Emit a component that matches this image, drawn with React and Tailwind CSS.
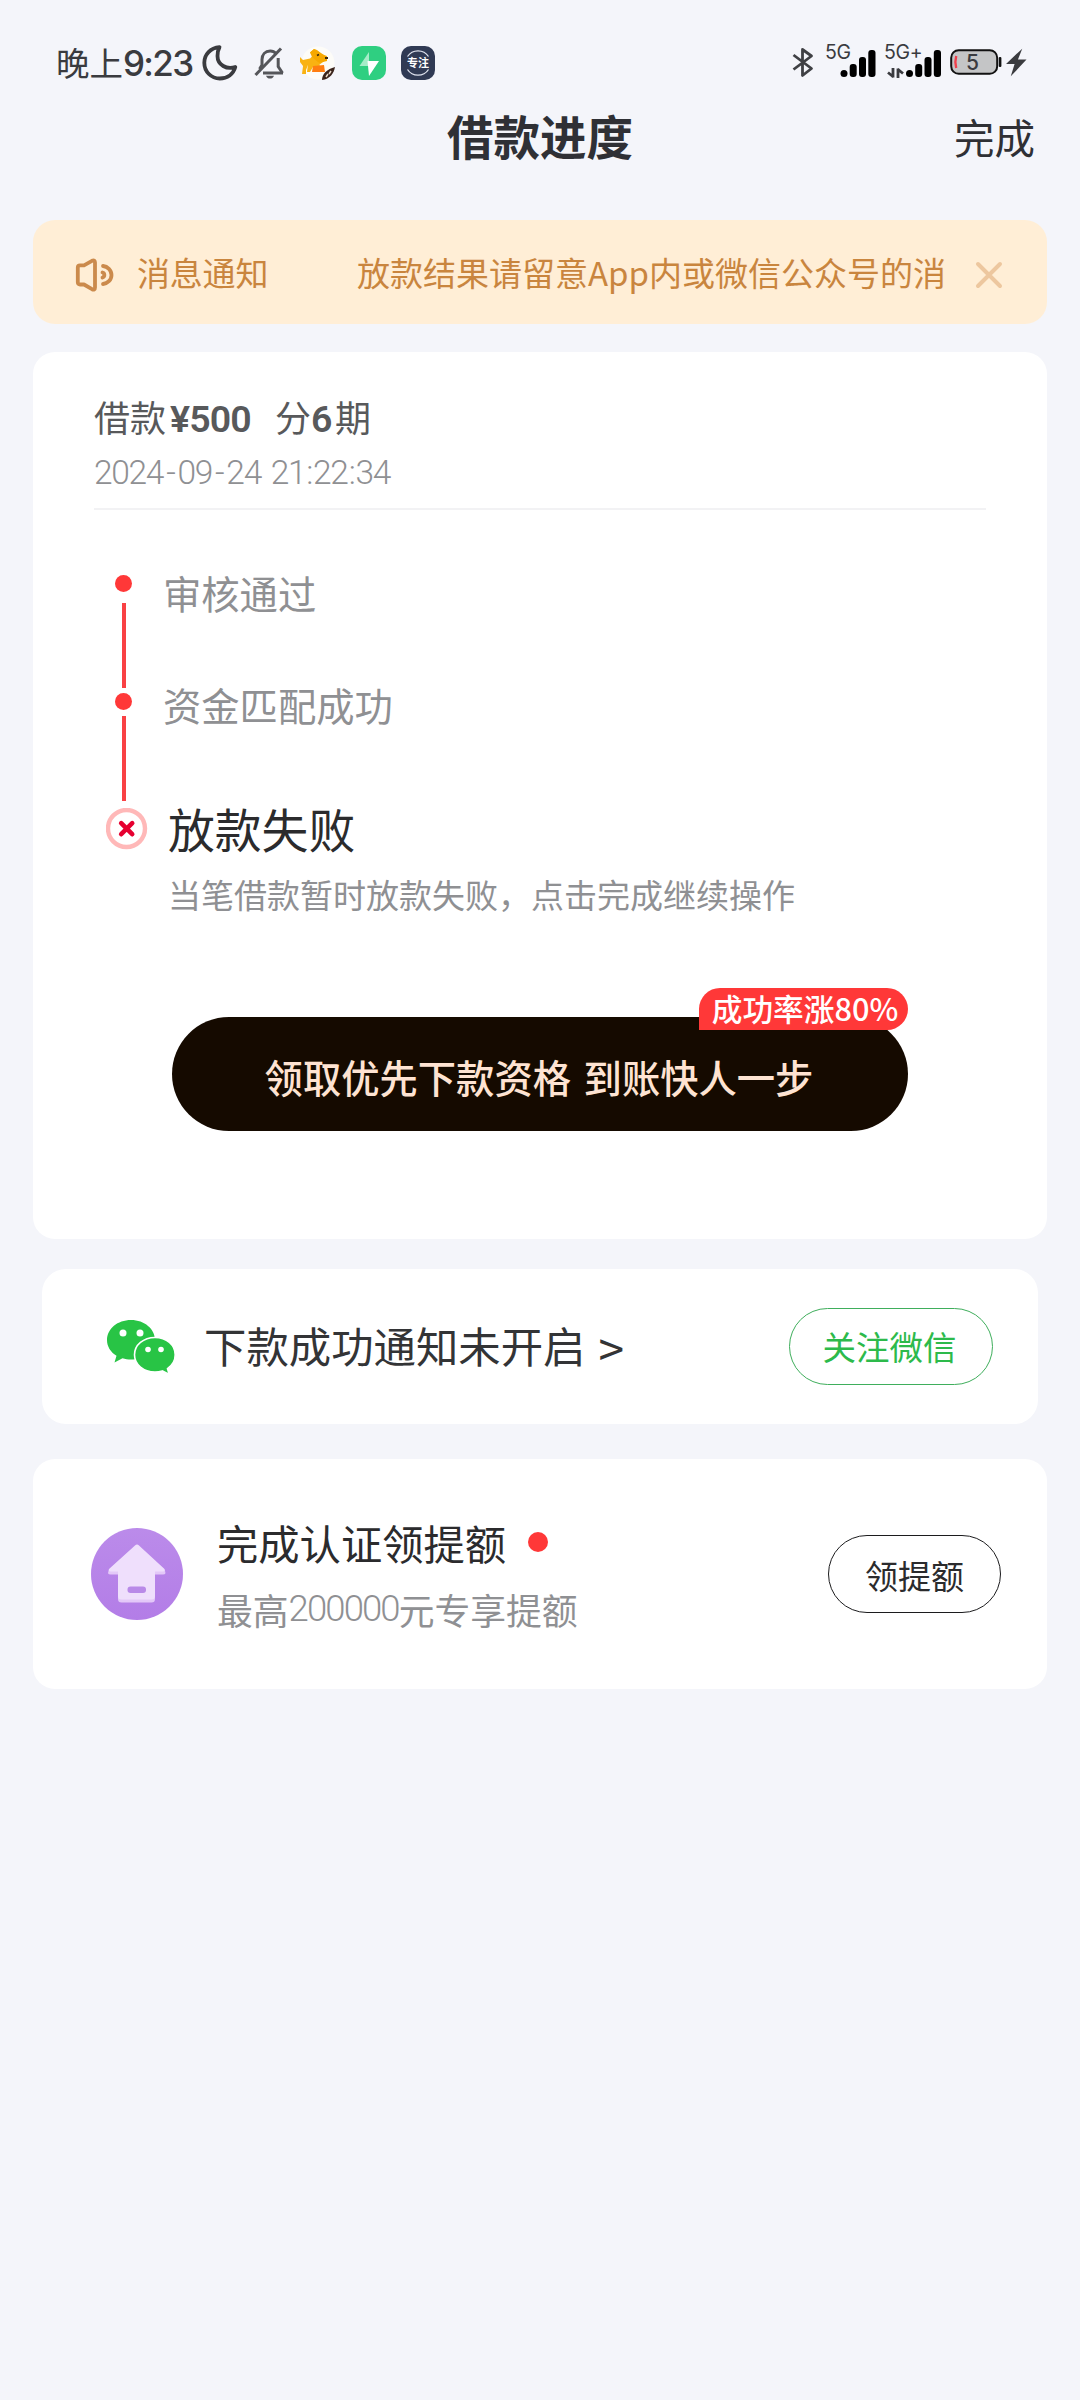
const STEPS = [
  { label: '审核通过', line: 'mt-[11px] mb-[5px]' },
  { label: '资金匹配成功', line: 'mt-[6px] mb-[7px]' },
];

function MoonIcon() {
  return (
    <svg width="36" height="36" viewBox="0 0 36 36" fill="none" stroke="#3a3b3f" strokeWidth="3.800" strokeLinejoin="round">
      <path d="M17.500 2.200C8.500 3 2.300 9.500 2.300 17.800c0 9 7 15.700 15.500 15.700 7.500 0 13.500-4.300 15.500-11.500-8.500 3-17.800-2-17.800-11 0-3.300.700-6.300 2-8.800z" />
    </svg>
  );
}

function BellOffIcon() {
  return (
    <svg width="32" height="34" viewBox="0 0 32 34" fill="none" stroke="#55565a" strokeWidth="3">
      <path d="M9 27h20" />
      <path d="M22 7.500C20.500 5.800 18.500 5 16.200 5c-5 0-8.200 3.600-8.200 8.600V19l-2.500 4" />
      <path d="M24.200 12v8.500l4.300 6.500" />
      <path d="M27 2.500L1.500 29" />
      <path d="M12 29.700h8c-.8 2-2.200 2.800-4 2.800s-3.200-.8-4-2.800z" fill="#55565a" stroke="none" />
    </svg>
  );
}

function DogIcon() {
  return (
    <svg width="36" height="34" viewBox="0 0 36 34">
      <circle cx="18" cy="17" r="16.500" fill="#fdfcf8" />
      <path d="M0 11l3 3 7-1.500 3-3-3-3L14 3l3 1 4 4 6 2v3l-4 3-4 3H8l-2 5v4H2l1-8-3-4z" fill="#f9b212" />
      <path d="M10 6.500L14 3l4 2 9 6v4l-8 2-7-6z" fill="#f6a800" />
      <path d="M8 18l10-2 2 4-7 1-3 5H7z" fill="#f9b212" />
      <path d="M13 20l11-1 1 7H12z" fill="#ff7d10" />
      <path d="M17 9.500l2-1M25 12h3" stroke="#3b2a10" strokeWidth="1.800" />
      <path d="M22 34c0-6 5-11 13-13-1 6-5 12-13 13z" fill="#3a231b" />
      <path d="M26 31l2-3m1 0l2-3" stroke="#e8d8c8" strokeWidth="1.500" />
    </svg>
  );
}

function FlashAppIcon() {
  return (
    <svg width="34" height="34" viewBox="0 0 34 34">
      <rect width="34" height="34" rx="10" fill="#2fcf81" />
      <path d="M17 6L7.500 20H17z" fill="#a5ecc8" />
      <path d="M15.500 15H27L17 30z" fill="#fff" />
    </svg>
  );
}

function FocusAppIcon() {
  return (
    <svg width="34" height="34" viewBox="0 0 34 34">
      <rect width="34" height="34" rx="10" fill="#303a54" />
      <path d="M6.500 10.500a12.500 12.500 0 0 1 21 0M6.500 23.500a12.500 12.500 0 0 0 21 0" fill="none" stroke="#dfe3ee" strokeWidth="1.300" />
      <text x="17" y="21" textAnchor="middle" fontSize="11" fontWeight="700" fill="#fff">专注</text>
    </svg>
  );
}

function BluetoothIcon() {
  return (
    <svg width="22" height="32" viewBox="0 0 22 32" fill="none" stroke="#3f4044" strokeWidth="2.800" strokeLinejoin="round">
      <path d="M1.500 9L19.500 22.500 10.500 29.500V3.500L19.500 10 1.500 23.500" />
    </svg>
  );
}

function SignalBars() {
  return (
    <>
      <rect x="0" y="25" width="7" height="7" rx="3.500" />
      <rect x="9.200" y="19" width="7" height="13" rx="3" />
      <rect x="18.500" y="12" width="7" height="20" rx="3" />
      <rect x="27.800" y="5" width="7.200" height="27" rx="3" />
    </>
  );
}

function BatteryIcon() {
  return (
    <svg width="52" height="28" viewBox="0 0 52 28">
      <rect x="1.200" y="2.200" width="46" height="23.600" rx="7.500" fill="#c4c5c6" stroke="#111" strokeWidth="2" />
      <path d="M6.200 8c-1 3.500-1 8.500 0 12" stroke="#f0404c" strokeWidth="2.400" fill="none" />
      <rect x="48.800" y="9" width="2.600" height="10" rx="1" fill="#111" />
      <text x="22.500" y="21.500" textAnchor="middle" fontSize="21" fontWeight="500" fill="#3a3b3f" className="font-[Inter]">5</text>
    </svg>
  );
}

function StatusBar() {
  return (
    <div className="flex h-[98px] items-start justify-between pt-[45px] pr-[53px] pl-[56px] text-[#3a3b3f]">
      <div className="flex items-center">
        <div className="flex h-9 w-[146px] items-center whitespace-nowrap">
          <span className="-mt-[3px] text-[33.500px] leading-9">晚上</span>
          <span className="font-[Inter] text-[35px] leading-9 font-medium tracking-[-1.700px]">9:23</span>
        </div>
        <MoonIcon />
        <div className="ml-4"><BellOffIcon /></div>
        <div className="ml-[14px]"><DogIcon /></div>
        <div className="ml-[16px]"><FlashAppIcon /></div>
        <div className="ml-[15px]"><FocusAppIcon /></div>
      </div>
      <div className="flex items-center">
        <BluetoothIcon />
        <div className="relative ml-[12px]">
          <svg width="50" height="34" viewBox="0 0 50 34">
            <g transform="translate(14.500 0)"><SignalBars /></g>
          </svg>
          <span className="absolute -top-[4px] -left-px font-[Inter] text-[19.500px] leading-[22px] tracking-[-0.300px]">5G</span>
        </div>
        <div className="relative ml-[9px]">
          <svg width="57" height="34" viewBox="0 0 57 34">
            <path d="M8 23v9.500M8.500 32L3 27.500M13 33v-9.500M12.500 24l5.500 4.500" stroke="#3a3b3f" strokeWidth="2.800" fill="none" />
            <g transform="translate(21 0)"><SignalBars /></g>
          </svg>
          <span className="absolute -top-[4px] -left-px font-[Inter] text-[19.500px] leading-[22px] tracking-[-0.300px]">5G+</span>
        </div>
        <div className="ml-[8px]"><BatteryIcon /></div>
        <svg className="ml-[4px]" width="21" height="32" viewBox="0 0 22 32">
          <path d="M17 2L0 18h9L5 31 21.500 13.500h-9z" fill="#3a3b3f" />
        </svg>
      </div>
    </div>
  );
}

function NoticeBar() {
  return (
    <div className="mx-[33px] flex h-[104px] items-center rounded-[22px] bg-[#ffeed6] pl-[42px] text-[33px] text-[#c9853e]">
      <svg className="mt-[5px]" width="40" height="34" viewBox="0 0 40 34" fill="none" stroke="#cb8a4c" strokeWidth="3.800" strokeLinejoin="round" strokeLinecap="round">
        <path d="M2.800 9.500c0-1.500.8-2.200 2.200-2.200H9L17 2.800c2-.9 3 0 3 1.700v25c0 1.700-1 2.600-3 1.700L9 26.500H5c-1.400 0-2.200-.7-2.200-2.200z" />
        <path d="M28 8c4.500.5 8.500 4 8.500 9s-4 8.500-8.500 9" />
        <path d="M27.500 14.500c2.200.5 2.700 4 0 5" />
      </svg>
      <span className="mt-[2px] ml-[22px] w-[220px] tracking-[-0.200px]">消息通知</span>
      <span className="mt-[2px] w-[599px] whitespace-nowrap">放款结果请留意App内或微信公众号的消</span>
      <svg className="mt-[5px] ml-[19px]" width="28" height="28" viewBox="0 0 28 28" stroke="#edc79f" strokeWidth="4" strokeLinecap="round">
        <path d="M3 3l22 22M25 3L3 25" />
      </svg>
    </div>
  );
}

function Timeline() {
  return (
    <div className="flex pt-[65px]">
      <div className="flex w-[69px] flex-col items-start">
        {STEPS.map((step) => (
          <div key={step.label} className="ml-[21px] flex w-[17px] flex-col items-center">
            <span className="size-[17px] rounded-full bg-[#ff3838]" />
            <span className={`h-[85px] w-[4px] bg-[#f94144] ${step.line}`} />
          </div>
        ))}
        <svg className="ml-[12px]" width="42" height="42" viewBox="0 0 42 42" fill="none">
          <circle cx="20.500" cy="20.500" r="18.500" stroke="#ffb8b8" strokeWidth="4.400" />
          <path d="M15.200 15.200l11 11M26.200 15.200l-11 11" stroke="#e60030" strokeWidth="4.600" strokeLinecap="round" />
        </svg>
      </div>
      <div className="flex flex-col text-[38.300px] text-[#8f9093]">
        {STEPS.map((step) => (
          <div key={step.label} className="h-[112px] leading-[36px]">{step.label}</div>
        ))}
        <div className="ml-[5px] pt-[5px] text-[46.800px] leading-[48px] text-[#2b2b2d]">放款失败</div>
        <div className="ml-[5px] pt-[24px] text-[33px] leading-[36px]">当笔借款暂时放款失败，点击完成继续操作</div>
      </div>
    </div>
  );
}

function LoanCard() {
  return (
    <div className="mx-[33px] mt-[28px] h-[887px] rounded-[22px] bg-white px-[61px]">
      <div className="flex h-[158px] flex-col border-b-2 border-[#f2f2f4] pt-[45px]">
        <div className="flex h-[40px] items-center text-[36px] leading-[38px] whitespace-nowrap text-[#58595b]">
          <span className="-mt-[2px]">借款</span>
          <span className="mt-[3px] ml-[4px] w-[105px] font-[Roboto] text-[37.500px] font-semibold tracking-[-0.900px]">¥500</span>
          <span className="-mt-[2px]">分</span>
          <span className="mt-[3px] w-[24px] font-[Roboto] text-[37.500px] font-semibold">6</span>
          <span className="-mt-[2px]">期</span>
        </div>
        <div className="mt-[16px] font-[Roboto] text-[33.500px] leading-[40px] font-[350] tracking-[-1.300px] [word-spacing:3px] text-[#8f9093]">
          2024<span className="mx-[3px]">-</span>09<span className="mx-[3px]">-</span>24 21<span className="mx-px">:</span>22<span className="mx-px">:</span>34
        </div>
      </div>
      <Timeline />
      <div className="relative mt-[105px] ml-[78px] flex h-[114px] w-[736px] items-center justify-center rounded-full bg-[#150a00] pt-[6px] pr-[2px] text-[38.300px] font-medium [word-spacing:4px] text-[#fee3d2]">
        领取优先下款资格 到账快人一步
        <span className="absolute -top-[29px] right-0 flex h-[42px] w-[209px] items-center justify-center rounded-[21px] rounded-bl-none bg-[#ff3838] pb-[2px] pl-[3px] text-[30.700px] font-medium whitespace-nowrap text-white">
          成功率涨80%
        </span>
      </div>
    </div>
  );
}

function WechatIcon() {
  return (
    <svg width="70" height="56" viewBox="0 0 70 56" fill="#28c445">
      <path d="M25 1C11.500 1 1 9.800 1 21c0 6.500 3.500 12 9.500 15.800L8.500 43.500l8-4.300c2.700.8 5.500 1.300 8.500 1.300 13.500 0 24-8.500 24-19.500S38.500 1 25 1z" />
      <path d="M49 18.500c-11.500 0-20.500 7.500-20.500 17.300S37.500 53 49 53c2.700 0 5-.4 7.300-1.100l7 3.600-1.800-5.800c4.600-3.200 7.700-8 7.700-13.900 0-9.800-8.700-17.300-20.200-17.300z" stroke="#fff" strokeWidth="1.600" />
      <circle cx="17" cy="14" r="3.500" fill="#fff" />
      <circle cx="34" cy="14" r="3.500" fill="#fff" />
      <circle cx="42" cy="30.500" r="2.800" fill="#fff" />
      <circle cx="55" cy="30.500" r="2.800" fill="#fff" />
    </svg>
  );
}

function WechatCard() {
  return (
    <div className="mx-[42px] mt-[30px] flex h-[155px] items-center rounded-[24px] bg-white pr-[45px] pl-[64px]">
      <WechatIcon />
      <div className="-mt-[4px] ml-[28px] flex flex-1 items-center text-[42.400px] leading-[60px] whitespace-nowrap text-[#333436]">
        下款成功通知未开启
        <span className="mt-[5px] ml-[13px] text-[46px]">&gt;</span>
      </div>
      <button className="h-[77px] w-[204px] rounded-full border border-[#3fae5c] pr-[3px] text-[33.500px] text-[#2dba4b]">关注微信</button>
    </div>
  );
}

function LimitCard() {
  return (
    <div className="mx-[33px] mt-[35px] flex h-[230px] items-center rounded-[22px] bg-white pr-[46px] pl-[58px]">
      <svg width="92" height="92" viewBox="0 0 92 92">
        <defs>
          <linearGradient id="house" x1="0" y1="0" x2="0" y2="1">
            <stop offset="0" stopColor="#bb8bea" />
            <stop offset="1" stopColor="#b37de7" />
          </linearGradient>
        </defs>
        <circle cx="46" cy="46" r="46" fill="url(#house)" />
        <path d="M44 18.500q2-2.500 4 0L73.500 42q2.500 4.500-1.500 4.500h-8V71q0 3.500-3.500 3.500h-30Q27 74.500 27 71V46.500h-7.500q-4 0-1.500-4.500z" fill="#e3c8f8" />
        <path d="M44 17.500q2-2 4 0L73.500 41q1 2.500-1.500 2.500h-8V68q0 3.500-3.500 3.500h-30Q27 71.500 27 68V43.500h-7.500q-2.500 0-1.500-2.500z" fill="#efdffc" />
        <rect x="36.500" y="58.500" width="18.500" height="6.500" rx="3" fill="#b98ae8" />
      </svg>
      <div className="ml-[34px] flex-1">
        <div className="flex items-center text-[41.300px] leading-[44px] text-[#2b2b2d]">
          完成认证领提额
          <span className="ml-[22px] size-[20px] rounded-full bg-[#ff3838]" />
        </div>
        <div className="mt-[25px] flex items-center text-[35.800px] leading-[40px] text-[#8f9093]">
          最高<span className="font-[Roboto] text-[36.500px] font-[350] tracking-[-1.900px]">200000</span>元专享提额
        </div>
      </div>
      <button className="h-[78px] w-[173px] rounded-full border border-[#1c1c1e] pt-[3px] text-[33px] text-[#2b2b2d]">领提额</button>
    </div>
  );
}

export default function App() {
  return (
    <div className="h-[2400px] w-[1080px] overflow-hidden bg-[#f4f5fa] font-['Noto_Sans_CJK_SC',sans-serif]">
      <StatusBar />
      <div className="grid h-[122px] grid-cols-3 items-start pt-[8px] text-[#2f3035]">
        <span />
        <h1 className="text-center text-[46.500px] leading-[58px] font-bold">借款进度</h1>
        <span className="pr-[45px] text-right text-[40.500px] leading-[62px]">完成</span>
      </div>
      <NoticeBar />
      <LoanCard />
      <WechatCard />
      <LimitCard />
    </div>
  );
}
